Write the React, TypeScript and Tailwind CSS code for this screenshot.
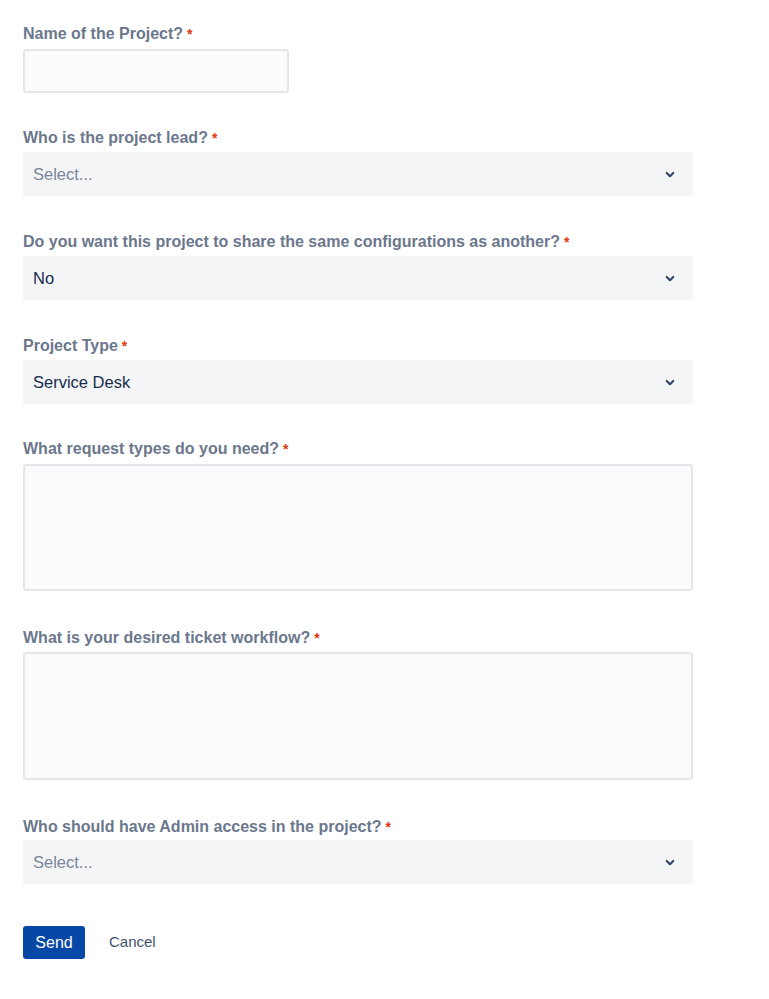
import React, { useState } from 'react'

function Label({ text }: { text: string }) {
  return (
    <label className="flex h-5 items-center pt-px text-[16px] font-bold leading-5 text-[#6b778c]">
      {text}
      <span className="ml-[4px] text-[14px] text-[#de350b]">*</span>
    </label>
  )
}

function Chevron() {
  return (
    <svg width="26" height="26" viewBox="0 0 24 24" className="text-[#344563]">
      <path
        d="M8.292 10.293a1.01 1.01 0 000 1.419l2.939 2.965c.218.215.5.322.779.322s.556-.107.769-.322l2.93-2.955a1.01 1.01 0 000-1.419.987.987 0 00-1.406 0l-2.298 2.317-2.307-2.327a.99.99 0 00-1.406 0z"
        fill="currentColor"
      />
    </svg>
  )
}

function SelectBox({ value, placeholder }: { value?: string; placeholder?: string }) {
  return (
    <div className="flex h-11 w-[670px] items-center justify-between rounded-[3px] bg-[#f4f5f7] pl-[10px] pr-[10px]">
      <span className={value ? 'text-[16.5px] text-[#172b4d]' : 'text-[16.5px] text-[#7a869a]'}>
        {value || placeholder}
      </span>
      <Chevron />
    </div>
  )
}

export default function App() {
  const [name, setName] = useState('')
  const [types, setTypes] = useState('')
  const [workflow, setWorkflow] = useState('')

  return (
    <div
      className="min-h-[999px] bg-white px-[23px] pt-[23px]"
      style={{ fontFamily: '"Liberation Sans", Arial, sans-serif' }}
    >
      <form className="flex flex-col" onSubmit={(e) => e.preventDefault()}>
        <div className="flex flex-col gap-[6px]">
          <Label text="Name of the Project?" />
          <input
            type="text"
            value={name}
            onChange={(e) => setName(e.target.value)}
            className="h-11 w-[266px] rounded-[3px] border-2 border-[#e4e6ea] bg-[#fafbfc] px-2 outline-none"
          />
        </div>

        <div className="mt-[34px] flex flex-col gap-[5px]">
          <Label text="Who is the project lead?" />
          <SelectBox placeholder="Select..." />
        </div>

        <div className="mt-[35px] flex flex-col gap-[5px]">
          <Label text="Do you want this project to share the same configurations as another?" />
          <SelectBox value="No" />
        </div>

        <div className="mt-[35px] flex flex-col gap-[5px]">
          <Label text="Project Type" />
          <SelectBox value="Service Desk" />
        </div>

        <div className="mt-[34px] flex flex-col gap-[6px]">
          <Label text="What request types do you need?" />
          <textarea
            value={types}
            onChange={(e) => setTypes(e.target.value)}
            className="h-[127px] w-[670px] resize-none rounded-[3px] border-2 border-[#e4e6ea] bg-[#fafbfc] p-2 outline-none"
          />
        </div>

        <div className="mt-[36px] flex flex-col gap-[5px]">
          <Label text="What is your desired ticket workflow?" />
          <textarea
            value={workflow}
            onChange={(e) => setWorkflow(e.target.value)}
            className="h-[128px] w-[670px] resize-none rounded-[3px] border-2 border-[#e4e6ea] bg-[#fafbfc] p-2 outline-none"
          />
        </div>

        <div className="mt-[36px] flex flex-col gap-[4px]">
          <Label text="Who should have Admin access in the project?" />
          <SelectBox placeholder="Select..." />
        </div>

        <div className="mt-[42px] flex items-center gap-[2px]">
          <button
            type="submit"
            className="h-[33px] w-[62px] rounded-[3px] bg-[#0747a6] text-[16px] text-white"
          >
            Send
          </button>
          <button type="button" className="h-[33px] px-[22px] text-[15px] text-[#42526e]">
            Cancel
          </button>
        </div>
      </form>
    </div>
  )
}
